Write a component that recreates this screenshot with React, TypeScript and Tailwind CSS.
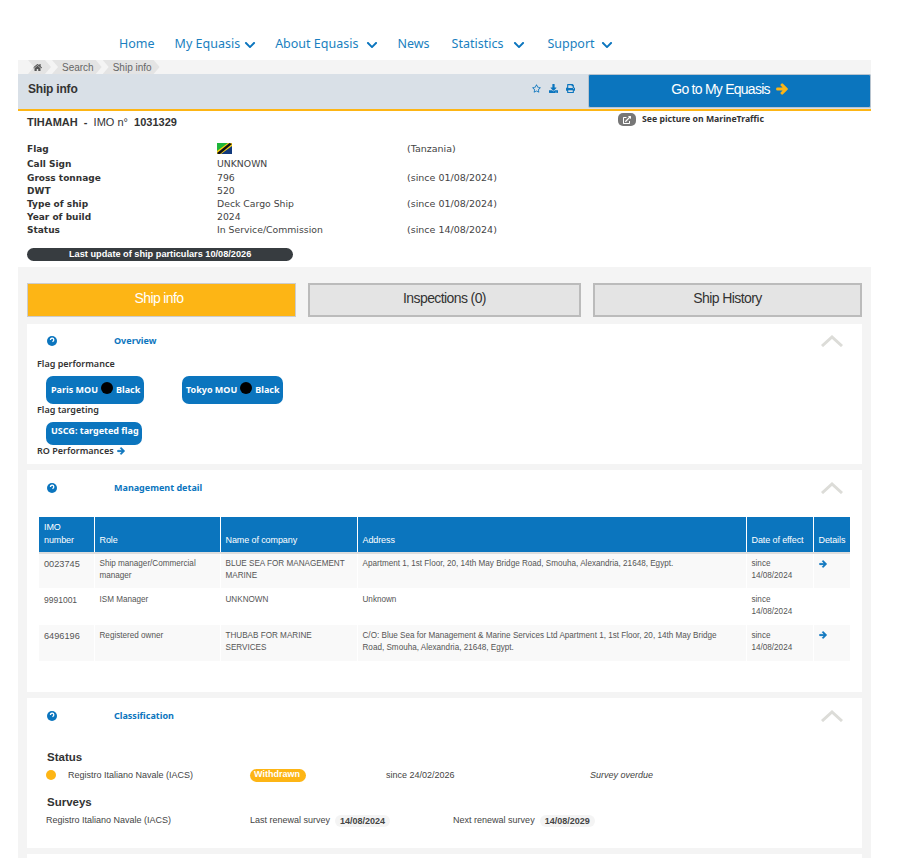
import { FaArrowRight, FaChevronDown, FaDownload, FaExternalLinkAlt, FaHome, FaPrint, FaRegStar } from 'react-icons/fa';

const navItems = [
  { label: 'Home', caret: '', cls: 'ml-[119px]' },
  { label: 'My Equasis', caret: 'ml-[4px]', cls: 'ml-[20px]' },
  { label: 'About Equasis', caret: 'ml-[8px]', cls: 'ml-[19px]' },
  { label: 'News', caret: '', cls: 'ml-[19px]' },
  { label: 'Statistics', caret: 'ml-[10px]', cls: 'ml-[22px]' },
  { label: 'Support', caret: 'ml-[6px]', cls: 'ml-[22px]' },
];

const particulars = [
  { label: 'Flag', value: '', note: '(Tanzania)', row: 'h-[15px]' },
  { label: 'Call Sign', value: 'UNKNOWN', note: '', row: 'h-[15px]' },
  { label: 'Gross tonnage', value: '796', note: '(since 01/08/2024)', row: 'h-[13px]' },
  { label: 'DWT', value: '520', note: '', row: 'h-[13px]' },
  { label: 'Type of ship', value: 'Deck Cargo Ship', note: '(since 01/08/2024)', row: 'h-[13px]' },
  { label: 'Year of build', value: '2024', note: '', row: 'h-[13px]' },
  { label: 'Status', value: 'In Service/Commission', note: '(since 14/08/2024)', row: 'h-[13px]' },
];

const managers = [
  {
    imo: '0023745',
    big: true,
    role: 'Ship manager/Commercial manager',
    company: 'BLUE SEA FOR MANAGEMENT MARINE',
    address: 'Apartment 1, 1st Floor, 20, 14th May Bridge Road, Smouha, Alexandria, 21648, Egypt.',
    link: true,
    row: 'h-[35px] bg-[#f9f9f9]',
    pad: 'pt-[4px]',
  },
  {
    imo: '9991001',
    big: false,
    role: 'ISM Manager',
    company: 'UNKNOWN',
    address: 'Unknown',
    link: false,
    row: 'h-[37px] bg-white',
    pad: 'pt-[6px]',
  },
  {
    imo: '6496196',
    big: true,
    role: 'Registered owner',
    company: 'THUBAB FOR MARINE SERVICES',
    address: 'C/O: Blue Sea for Management & Marine Services Ltd Apartment 1, 1st Floor, 20, 14th May Bridge Road, Smouha, Alexandria, 21648, Egypt.',
    link: true,
    row: 'h-[36px] bg-[#f9f9f9]',
    pad: 'pt-[5px]',
  },
];

function HelpDot() {
  return (
    <svg width="10" height="10" viewBox="0 0 10 10" className="shrink-0">
      <circle cx="5" cy="5" r="5" fill="#0b75be" />
      <path d="M3.4 4 A1.7 1.7 0 1 1 5.4 5.6" fill="none" stroke="#fff" strokeWidth="1.3" />
    </svg>
  );
}

function Collapse() {
  return (
    <svg width="22" height="12" viewBox="0 0 22 12" className="shrink-0">
      <path d="M1 11 L11 2 L21 11" fill="none" stroke="#dcdcd8" strokeWidth="3" />
    </svg>
  );
}

function CardHeader({ title }: { title: string }) {
  return (
    <div className="flex items-center pl-5 pr-[19px]">
      <HelpDot />
      <span className="ml-[57px] font-['Noto_Sans',sans-serif] text-[9px] font-bold text-[#0b75be]">{title}</span>
      <span className="ml-auto">
        <Collapse />
      </span>
    </div>
  );
}

function Crumb({ children, first }: { children: React.ReactNode; first?: boolean }) {
  return (
    <span
      className={`flex h-[14px] items-center bg-[#e4e4e4] pr-2 text-[10px] text-[#666] [clip-path:polygon(0_0,calc(100%-6px)_0,100%_50%,calc(100%-6px)_100%,0_100%,6px_50%)] ${first ? 'w-[23px] pl-[5px]' : 'pl-[10px]'}`}
    >
      {children}
    </span>
  );
}

function BoldArrow({ cls }: { cls: string }) {
  return <FaArrowRight className={cls} stroke="currentColor" strokeWidth={50} />;
}

export default function App() {
  return (
    <div className="h-[858px] w-[918px] overflow-hidden bg-white font-['Liberation_Sans',sans-serif] text-[#333]">
      {/* top nav */}
      <nav className="flex h-[60px] items-center pt-[29px] font-['Noto_Sans',sans-serif] text-[12.5px] text-[#1a7fc0]">
        {navItems.map((n) => (
          <span key={n.label} className={`flex items-center ${n.cls}`}>
            {n.label}
            {n.caret && <FaChevronDown className={`${n.caret} text-[12px] text-[#0b75be]`} />}
          </span>
        ))}
      </nav>

      <div className="mx-[18px] w-[853px]">
        {/* breadcrumb */}
        <div className="flex h-[14px] gap-[1px] bg-[#f4f4f4] pl-[10px]">
          <Crumb first>
            <FaHome className="text-[9px] text-[#555]" />
          </Crumb>
          <Crumb>Search</Crumb>
          <Crumb>Ship info</Crumb>
        </div>

        {/* title bar */}
        <div className="flex h-[37px] border-b-[2px] border-[#fdb515] bg-[#d9e0e7]">
          <h1 className="ml-[10px] mt-[6px] text-[12px] font-bold tracking-[-0.2px] text-[#333]">Ship info</h1>
          <div className="ml-auto flex h-[34px] items-center gap-[8px] pr-[13px] pb-[5px] text-[#0b75be]">
            <FaRegStar className="text-[9px]" />
            <FaDownload className="text-[9px]" />
            <FaPrint className="text-[9px]" />
          </div>
          <button className="flex h-[34px] w-[283px] items-center justify-center gap-[6px] rounded-[2px] border border-[#b8c4cf] bg-[#0b75be] pb-[4px] text-[14px] tracking-[-0.75px] text-white">
            Go to My Equasis
            <BoldArrow cls="text-[12px] text-[#fdb515]" />
          </button>
        </div>

        {/* ship particulars */}
        <div className="relative h-[156px] bg-white pl-[9px] font-['DejaVu_Sans',sans-serif] text-[9.3px] text-[#333]">
          <div className="pt-[4px] font-['Liberation_Sans',sans-serif] text-[11px] font-bold leading-[14px]">
            TIHAMAH&nbsp; -&nbsp; <span className="font-normal">IMO n°</span>&nbsp; 1031329
          </div>
          <div className="absolute left-[600px] top-[2px] flex items-center gap-[6px] font-['Noto_Sans',sans-serif] text-[8.7px] font-bold">
            <span className="flex h-[13px] w-[18px] items-center justify-center rounded-[5px] bg-[#777]">
              <FaExternalLinkAlt className="text-[8px] text-white" />
            </span>
            See picture on MarineTraffic
          </div>
          <div className="mt-[13px]">
            {particulars.map((p) => (
              <div key={p.label} className={`flex items-center ${p.row}`}>
                <span className="w-[190px] pt-[1px] text-[9px] font-bold">{p.label}</span>
                <span className="w-[190px] pb-[2px] text-[#444]">
                  {p.value || (
                    <svg width="15" height="11" viewBox="0 0 15 11" className="block">
                      <rect width="15" height="11" fill="#1eb53a" />
                      <path d="M15 0 V11 H0 Z" fill="#123a7c" />
                      <path d="M0 11 L0 8 L11 0 L15 0 L15 3 L4 11 Z" fill="#fcd116" />
                      <path d="M1 11 L0 10 L12.500 0 L15 1 L3 11 Z" fill="#111" />
                    </svg>
                  )}
                </span>
                <span className="text-[9.500px] text-[#444]">{p.note}</span>
              </div>
            ))}
          </div>
          <div className="mt-[11px] h-[13px] w-[266px] rounded-full bg-[#373c40] pl-[42px] font-['Liberation_Sans',sans-serif] text-[9.2px] font-bold leading-[12px] text-white">
            Last update of ship particulars 10/08/2026
          </div>
        </div>

        {/* gray content area */}
        <div className="h-[591px] bg-[#f4f4f4] px-[9px] pt-[16px]">
          <div className="flex gap-[12px] text-[14px] tracking-[-0.6px]">
            <div className="flex h-[34px] w-[269px] items-center justify-center border border-[#ccc] bg-[#fdb515] pb-[3px] pr-[5px] text-white">
              Ship info
            </div>
            <div className="flex h-[34px] w-[273px] items-center justify-center border-2 border-[#bbb] bg-[#e4e4e4] pb-[3px] text-[#333]">
              Inspections (0)
            </div>
            <div className="flex h-[34px] w-[269px] items-center justify-center border-2 border-[#bbb] bg-[#e4e4e4] pb-[3px] text-[#333]">
              Ship History
            </div>
          </div>

          {/* overview */}
          <section className="mt-[7px] h-[140px] bg-white pt-[10px] font-['Noto_Sans',sans-serif] text-[9px] whitespace-nowrap">
            <CardHeader title="Overview" />
            <div className="ml-[10px] mt-[10px] font-semibold leading-[12px] text-[#333]">Flag performance</div>
            <div className="ml-[19px] mt-[6px] flex h-[28px] gap-[38px]">
              <span className="flex w-[98px] items-center rounded-[7px] bg-[#0b75be] pl-[5px] pt-[1px] font-bold text-white">
                Paris MOU
                <i className="mx-[3px] mb-[4px] h-[12px] w-[12px] rounded-full bg-black" />
                Black
              </span>
              <span className="flex w-[101px] items-center rounded-[7px] bg-[#0b75be] pl-[4px] pt-[1px] font-bold text-white">
                Tokyo MOU
                <i className="mx-[3px] mb-[4px] h-[12px] w-[12px] rounded-full bg-black" />
                Black
              </span>
            </div>
            <div className="ml-[10px] font-semibold leading-[12px]">Flag targeting</div>
            <div className="ml-[19px] mt-[6px] flex h-[23px] w-[96px] rounded-[7px] bg-[#0b75be] pl-[5px] pt-[3px] font-bold leading-[12px] text-white">
              USCG: targeted flag
            </div>
            <div className="ml-[10px] flex items-center gap-[3px] font-semibold leading-[12px]">
              RO Performances
              <BoldArrow cls="text-[8px] text-[#0b75be]" />
            </div>
          </section>

          {/* management */}
          <section className="mt-[6px] h-[222px] bg-white pt-[11px]">
            <CardHeader title="Management detail" />
            <table className="ml-[12px] mt-[22px] w-[811px] table-fixed text-[8.15px] text-[#555]">
              <colgroup>
                <col className="w-[55px]" />
                <col className="w-[126px]" />
                <col className="w-[137px]" />
                <col className="w-[389px]" />
                <col className="w-[67px]" />
                <col className="w-[37px]" />
              </colgroup>
              <thead>
                <tr className="h-[36px] border-b-2 border-[#ddd] bg-[#0b75be] text-left align-bottom text-white">
                  {['IMO number', 'Role', 'Name of company', 'Address', 'Date of effect', 'Details'].map((h) => (
                    <th key={h} className="border-r border-white pb-[5px] pl-[5px] pr-[5px] text-[9px] font-normal leading-[13px] tracking-[-0.1px] last:border-r-0 last:pr-0">
                      {h}
                    </th>
                  ))}
                </tr>
              </thead>
              <tbody>
                {managers.map((m) => (
                  <tr key={m.imo} className={`${m.row} align-top leading-[12px]`}>
                    <td className={`border-r border-white pl-[5px] ${m.pad} ${m.big ? 'text-[9.200px]' : 'text-[8.500px]'}`}>{m.imo}</td>
                    <td className={`border-r border-white pl-[5px] pr-[2px] ${m.pad}`}>{m.role}</td>
                    <td className={`border-r border-white pl-[5px] pr-[10px] ${m.pad}`}>{m.company}</td>
                    <td className={`border-r border-white pl-[5px] pr-[16px] ${m.pad}`}>{m.address}</td>
                    <td className={`border-r border-white pl-[5px] ${m.pad}`}>
                      since
                      <br />
                      14/08/2024
                    </td>
                    <td className="pl-[5px] pt-[6px]">{m.link && <BoldArrow cls="text-[8px] text-[#0b75be]" />}</td>
                  </tr>
                ))}
              </tbody>
            </table>
          </section>

          {/* classification */}
          <section className="mt-[6px] h-[150px] bg-white pt-[11px] text-[9px] text-[#444]">
            <CardHeader title="Classification" />
            <h3 className="ml-5 mt-[27px] text-[11.5px] font-bold leading-[14px] text-[#333]">Status</h3>
            <div className="ml-[19px] mt-[5px] flex h-[14px] items-center">
              <i className="mb-[2px] h-[10px] w-[10px] rounded-full bg-[#fdb515]" />
              <span className="ml-[12px] w-[182px]">Registro Italiano Navale (IACS)</span>
              <span className="h-[13px] w-[56px] rounded-full bg-[#fdb515] pl-[4px] font-bold leading-[11px] text-white">Withdrawn</span>
              <span className="ml-[80px] w-[204px]">since 24/02/2026</span>
              <span className="italic">Survey overdue</span>
            </div>
            <h3 className="ml-5 mt-[12px] text-[11.5px] font-bold leading-[14px] text-[#333]">Surveys</h3>
            <div className="ml-[19px] mt-[5px] flex h-[14px] items-center">
              <span className="w-[204px]">Registro Italiano Navale (IACS)</span>
              <span>Last renewal survey</span>
              <span className="ml-[5px] rounded-full bg-[#f4f4f4] px-[5px] font-bold leading-[12px]">14/08/2024</span>
              <span className="ml-[63px]">Next renewal survey</span>
              <span className="ml-[5px] rounded-full bg-[#f4f4f4] px-[5px] font-bold leading-[12px]">14/08/2029</span>
            </div>
          </section>

          <section className="mt-[6px] h-[20px] bg-white" />
        </div>
      </div>
    </div>
  );
}
